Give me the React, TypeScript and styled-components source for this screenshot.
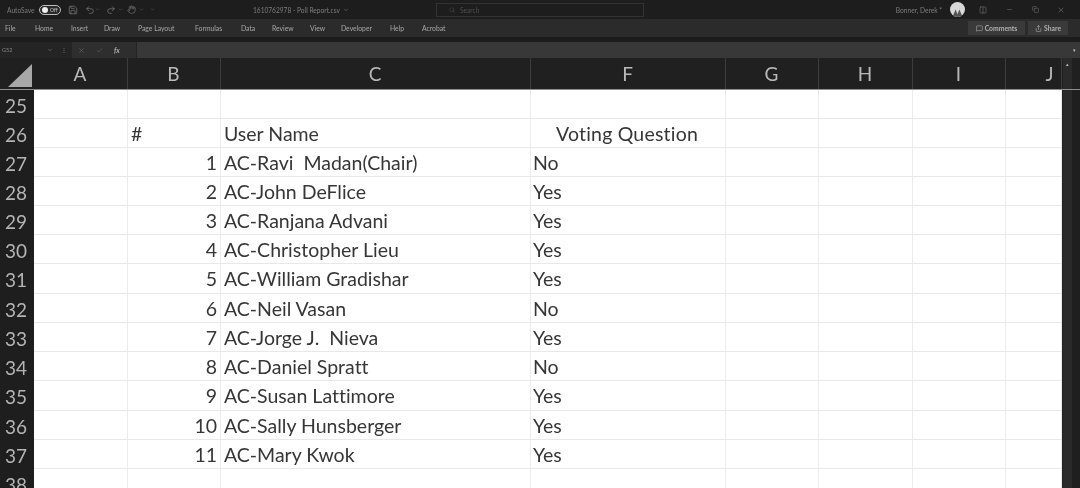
import styled, { createGlobalStyle } from "styled-components";
import {
	ChevronDown,
	Check,
	Columns2,
	Copy,
	Hand,
	MessageSquare,
	Minus,
	Redo2,
	Save,
	Search,
	Share,
	Undo2,
	X,
} from "lucide-react";

const COLUMNS = "34px 94px 93px 310px 195px 93px 94px 93px 56px 18px";

const GlobalStyle = createGlobalStyle`
	html, body {
		margin: 0;
		height: 488px;
		overflow: hidden;
		background: #1f1f1f;
	}
	* {
		box-sizing: border-box;
	}
`;

const Page = styled.div`
	width: 1080px;
	height: 488px;
	overflow: hidden;
	display: flex;
	flex-direction: column;
	font-family: "Lato", "Liberation Sans", sans-serif;
	font-variant-ligatures: none;
	background: #1f1f1f;
`;

const TitleBar = styled.div`
	height: 19px;
	display: flex;
	align-items: center;
	background: #1d1d1d;
	color: #7d7d7d;
	font-size: 6.6px;
	filter: blur(0.35px);
`;

const QuickAccess = styled.div`
	width: 253px;
	padding-left: 7px;
	display: flex;
	align-items: center;
`;

const AutoSaveLabel = styled.span`
	width: 32px;
`;

const Toggle = styled.div`
	width: 22px;
	height: 10px;
	margin-right: 7px;
	border-radius: 5px;
	border: 1px solid #bdbdbd;
	background: #2a2a2a;
	display: flex;
	align-items: center;
	padding-left: 2px;
	color: #cfcfcf;
	font-size: 5px;
	gap: 2px;
	&::before {
		content: "";
		width: 6px;
		height: 6px;
		border-radius: 50%;
		background: #efefef;
	}
`;

const QuickIcon = styled.span<{ $width: number }>`
	width: ${(p) => p.$width}px;
	flex: none;
	display: flex;
	color: #6e6e6e;
`;

const FileTitle = styled.div`
	width: 183px;
	display: flex;
	align-items: center;
	gap: 3px;
`;

const SearchBox = styled.div`
	width: 208px;
	height: 14px;
	border: 1px solid #333;
	display: flex;
	align-items: center;
	gap: 5px;
	padding-left: 12px;
	color: #4f4f4f;
`;

const Account = styled.div`
	margin-left: auto;
	padding-right: 6px;
	display: flex;
	align-items: center;
`;

const UserName = styled.span`
	margin-right: 8px;
`;

const Avatar = styled.svg`
	width: 15px;
	height: 15px;
	margin-right: 5px;
`;

const WindowButton = styled.span`
	width: 26px;
	display: flex;
	justify-content: center;
	color: #6a6a6a;
`;

const RibbonTabs = styled.div`
	height: 18px;
	display: flex;
	align-items: center;
	background: #2b2b2b;
	color: #a8a8a8;
	font-size: 6.8px;
	filter: blur(0.35px);
`;

const Tab = styled.span<{ $width: number }>`
	width: ${(p) => p.$width}px;
	flex: none;
	padding-left: 5px;
`;

const RibbonActions = styled.div`
	margin-left: auto;
	padding-right: 12px;
	display: flex;
	gap: 3px;
`;

const RibbonButton = styled.div<{ $width: number }>`
	width: ${(p) => p.$width}px;
	height: 14px;
	display: flex;
	align-items: center;
	justify-content: center;
	gap: 2px;
	background: #3a3a3a;
	font-weight: 700;
	color: #b0b0b0;
`;

const RibbonGap = styled.div`
	height: 5px;
	background: #1c1c1c;
`;

const FormulaBar = styled.div`
	height: 16px;
	display: flex;
	align-items: center;
	background: #242424;
	color: #8a8a8a;
	font-size: 5.5px;
	filter: blur(0.35px);
`;

const NameBox = styled.div`
	width: 55px;
	padding: 0 2px;
	display: flex;
	align-items: center;
	justify-content: space-between;
`;

const Dots = styled.span`
	width: 17px;
	text-align: center;
`;

const FormulaIcons = styled.div`
	width: 64px;
	height: 100%;
	display: flex;
	align-items: center;
	gap: 11px;
	padding-left: 6px;
	background: #2e2e2e;
	color: #6c6c6c;
`;

const FunctionLabel = styled.span`
	color: #adadad;
	font-style: italic;
	font-weight: 700;
	font-size: 7px;
`;

const FormulaInput = styled.div`
	flex: 1;
	margin-left: 1px;
	height: 100%;
	background: #383838;
	display: flex;
	justify-content: flex-end;
	align-items: center;
	padding-right: 4px;
	color: #bdbdbd;
	font-size: 5px;
`;

const HeaderRow = styled.div`
	height: 32px;
	display: grid;
	grid-template-columns: ${COLUMNS};
	background: #202020;
	border-bottom: 1px solid #8f8f8f;
`;

const Corner = styled.div`
	display: flex;
	align-items: flex-end;
	justify-content: flex-end;
	padding: 0 2px 1px 0;
`;

const ColumnLabel = styled.div<{ $offset?: number }>`
	display: flex;
	align-items: center;
	justify-content: center;
	padding-left: ${(p) => p.$offset ?? 0}px;
	padding-right: 1px;
	color: #b9b9b9;
	font-size: 19px;
	border-right: 1px solid #3c3c3c;
	filter: blur(0.4px);
`;

const ScrollTrack = styled.div`
	background: #2a2a2a;
	margin: 0 8px 0 1px;
	display: flex;
	justify-content: center;
	color: #bbb;
	font-size: 5px;
	padding-top: 3px;
`;

const Sheet = styled.div`
	flex: 1;
	display: flex;
	flex-direction: column;
	overflow: hidden;
`;

const Row = styled.div<{ $tall?: boolean }>`
	height: ${(p) => (p.$tall ? 30 : 29)}px;
	flex: none;
	display: grid;
	grid-template-columns: ${COLUMNS};
	grid-template-rows: minmax(0, 1fr);
`;

const RowNumber = styled.div`
	background: #1e1e1e;
	color: #b4b4b4;
	font-size: 19px;
	display: flex;
	align-items: center;
	justify-content: center;
	padding: 1px 2px 0 0;
	filter: blur(0.4px);
`;

const Cell = styled.div<{ $align?: "left" | "right" }>`
	background: #fff;
	border-right: 1px solid #ececec;
	border-bottom: 1px solid #e8e8e8;
	color: #363636;
	font-size: 19.5px;
	line-height: 30px;
	padding: 0 3px;
	white-space: pre;
	text-align: ${(p) => p.$align ?? "left"};
	filter: blur(0.35px);
`;

const VoteCell = styled(Cell)`
	padding-left: 2px;
`;

const HeadingCell = styled(Cell)`
	padding-left: 25px;
	letter-spacing: 0.2px;
`;

const RightGutter = styled.div`
	background: #2a2a2a;
	margin: 0 8px 0 1px;
`;

const people: [string, string][] = [
	["AC-Ravi  Madan(Chair)", "No"],
	["AC-John DeFlice", "Yes"],
	["AC-Ranjana Advani", "Yes"],
	["AC-Christopher Lieu", "Yes"],
	["AC-William Gradishar", "Yes"],
	["AC-Neil Vasan", "No"],
	["AC-Jorge J.  Nieva", "Yes"],
	["AC-Daniel Spratt", "No"],
	["AC-Susan Lattimore", "Yes"],
	["AC-Sally Hunsberger", "Yes"],
	["AC-Mary Kwok", "Yes"],
];

const tabs: [string, number][] = [
	["File", 30],
	["Home", 36],
	["Insert", 33],
	["Draw", 34],
	["Page Layout", 57],
	["Formulas", 46],
	["Data", 31],
	["Review", 38],
	["View", 31],
	["Developer", 49],
	["Help", 32],
	["Acrobat", 40],
];

const columns: [string, number?][] = [
	["A"],
	["B"],
	["C"],
	["F"],
	["G"],
	["H"],
	["I"],
	["J", 33],
];

// rows 31 and 35 come out a pixel taller in the reference
const TALL_ROWS = [31, 35];

const BlankCells = () => (
	<>
		<Cell />
		<Cell />
		<Cell />
		<Cell />
	</>
);

const App = (): JSX.Element => (
	<Page>
		<GlobalStyle />
		<TitleBar>
			<QuickAccess>
				<AutoSaveLabel>AutoSave</AutoSaveLabel>
				<Toggle>Off</Toggle>
				<QuickIcon $width={17}>
					<Save size={10} />
				</QuickIcon>
				<QuickIcon $width={10}>
					<Undo2 size={10} />
				</QuickIcon>
				<QuickIcon $width={11}>
					<ChevronDown size={5} />
				</QuickIcon>
				<QuickIcon $width={12}>
					<Redo2 size={10} />
				</QuickIcon>
				<QuickIcon $width={9}>
					<ChevronDown size={5} />
				</QuickIcon>
				<QuickIcon $width={12}>
					<Hand size={9} />
				</QuickIcon>
				<QuickIcon $width={11}>
					<ChevronDown size={5} />
				</QuickIcon>
				<QuickIcon $width={6}>
					<ChevronDown size={5} />
				</QuickIcon>
			</QuickAccess>
			<FileTitle>
				1610762978 - Poll Report.csv
				<ChevronDown size={6} />
			</FileTitle>
			<SearchBox>
				<Search size={6} />
				Search
			</SearchBox>
			<Account>
				<UserName>Bonner, Derek *</UserName>
				<Avatar viewBox="0 0 16 16">
					<circle cx="8" cy="8" r="8" fill="#d8d8d8" />
					<path d="M3 15 L6 8 L8 13 L10 8 L13 15 L8 16 Z" fill="#555" />
				</Avatar>
				<WindowButton>
					<Columns2 size={8} />
				</WindowButton>
				<WindowButton>
					<Minus size={7} />
				</WindowButton>
				<WindowButton>
					<Copy size={7} />
				</WindowButton>
				<WindowButton>
					<X size={8} />
				</WindowButton>
			</Account>
		</TitleBar>
		<RibbonTabs>
			{tabs.map(([label, width]) => (
				<Tab key={label} $width={width}>
					{label}
				</Tab>
			))}
			<RibbonActions>
				<RibbonButton $width={57}>
					<MessageSquare size={7} />
					Comments
				</RibbonButton>
				<RibbonButton $width={40}>
					<Share size={7} />
					Share
				</RibbonButton>
			</RibbonActions>
		</RibbonTabs>
		<RibbonGap />
		<FormulaBar>
			<NameBox>
				G52
				<ChevronDown size={6} />
			</NameBox>
			<Dots>⋮</Dots>
			<FormulaIcons>
				<X size={7} />
				<Check size={7} />
				<FunctionLabel>fx</FunctionLabel>
			</FormulaIcons>
			<FormulaInput>▾</FormulaInput>
		</FormulaBar>
		<HeaderRow>
			<Corner>
				<svg width="24" height="24" viewBox="0 0 24 24">
					<path d="M24 0 V23 H0 Z" fill="#a8a8a8" />
				</svg>
			</Corner>
			{columns.map(([label, offset]) => (
				<ColumnLabel key={label} $offset={offset}>
					{label}
				</ColumnLabel>
			))}
			<ScrollTrack>▴</ScrollTrack>
		</HeaderRow>
		<Sheet>
			<Row>
				<RowNumber>25</RowNumber>
				<Cell />
				<Cell />
				<Cell />
				<Cell />
				<BlankCells />
				<RightGutter />
			</Row>
			<Row>
				<RowNumber>26</RowNumber>
				<Cell />
				<Cell>#</Cell>
				<Cell>User Name</Cell>
				<HeadingCell>Voting Question</HeadingCell>
				<BlankCells />
				<RightGutter />
			</Row>
			{people.map(([name, vote], index) => (
				<Row key={name} $tall={TALL_ROWS.includes(27 + index)}>
					<RowNumber>{27 + index}</RowNumber>
					<Cell />
					<Cell $align="right">{index + 1}</Cell>
					<Cell>{name}</Cell>
					<VoteCell>{vote}</VoteCell>
					<BlankCells />
					<RightGutter />
				</Row>
			))}
			<Row>
				<RowNumber>38</RowNumber>
				<Cell />
				<Cell />
				<Cell />
				<Cell />
				<BlankCells />
				<RightGutter />
			</Row>
		</Sheet>
	</Page>
);

export default App;
